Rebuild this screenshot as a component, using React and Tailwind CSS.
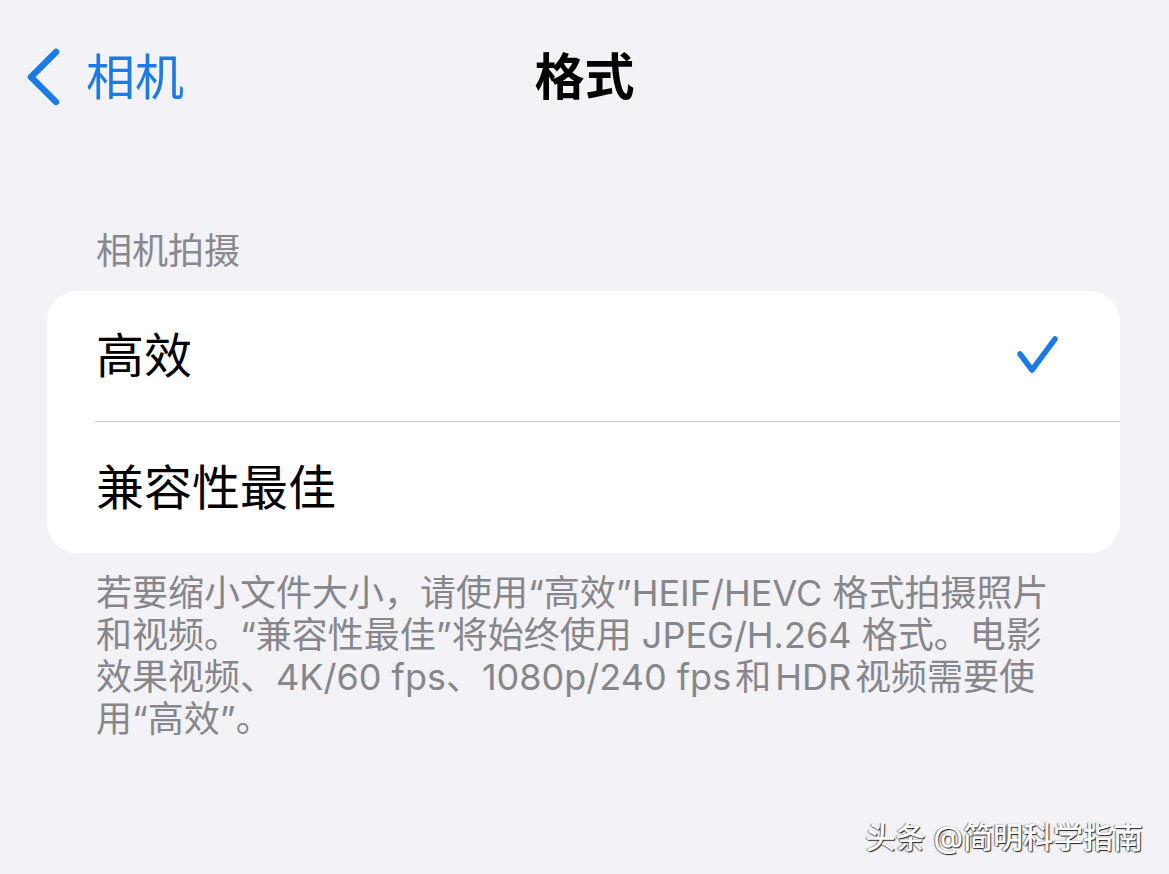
import React from "react";

const FONT = { fontFamily: '"Inter", "Noto Sans CJK SC", sans-serif' };

function Chevron() {
  return (
    <svg width="36" height="60" viewBox="0 0 36 60" className="shrink-0">
      <path
        d="M31 5 L6 30 L31 55"
        fill="none"
        stroke="#1b7be6"
        strokeWidth="6.5"
        strokeLinecap="round"
        strokeLinejoin="round"
      />
    </svg>
  );
}

function Check() {
  return (
    <svg width="44" height="42" viewBox="0 0 44 42">
      <path
        d="M4 19 L16 35 L39 4"
        fill="none"
        stroke="#1b7be6"
        strokeWidth="5.5"
        strokeLinecap="round"
        strokeLinejoin="round"
      />
    </svg>
  );
}

export default function App() {
  return (
    <div
      className="relative h-[874px] w-[1169px] overflow-hidden bg-[#f2f2f7] text-black"
      style={FONT}
    >
      {/* navigation bar */}
      <div className="grid h-[94px] grid-cols-[1fr_auto_1fr] items-center mt-[30px]">
        <div className="flex items-center gap-[25px] pl-[25px]">
          <Chevron />
          <span className="text-[49px] leading-none text-[#1b7be6]">相机</span>
        </div>
        <div className="text-[50px] font-bold leading-none">格式</div>
        <div />
      </div>

      {/* section header */}
      <div className="mt-[107px] pl-[96px] text-[36px] leading-[40px] text-[#88888d]">
        相机拍摄
      </div>

      {/* options card */}
      <div className="mt-[20px] ml-[47px] w-[1073px] overflow-hidden rounded-[30px] bg-white">
        <div className="flex h-[130px] items-center justify-between pl-[49px] pr-[60px]">
          <span className="text-[48px] leading-none">高效</span>
          <Check />
        </div>
        <div className="ml-[48px] h-px bg-[#c8c8cc]" />
        <div className="flex h-[131px] items-center pl-[49px]">
          <span className="text-[48px] leading-none">兼容性最佳</span>
        </div>
      </div>

      {/* footer note */}
      <div className="mt-[19px] pl-[96px] text-[36px] leading-[42px] text-[#86868b]">
        <div className="whitespace-nowrap">若要缩小文件大小，请使用“高效”HEIF/HEVC 格式拍摄照片</div>
        <div className="whitespace-nowrap">和视频。“兼容性最佳”将始终使用 JPEG/H.264 格式。电影</div>
        <div className="whitespace-nowrap">效果视频、4K/60 fps、1080p/240 fps<span className="inline-block w-[4px]" />和<span className="inline-block w-[4px]" />HDR<span className="inline-block w-[4px]" />视频需要使</div>
        <div className="whitespace-nowrap">用“高效”。</div>
      </div>

      {/* watermark */}
      <div
        className="absolute right-[26px] bottom-[22px] text-[30px] font-medium leading-none text-white"
        style={{ textShadow: "1px 1px 1px rgba(0,0,0,0.85), -1px 0 1px rgba(0,0,0,0.5)" }}
      >
        头条 @简明科学指南
      </div>
    </div>
  );
}
